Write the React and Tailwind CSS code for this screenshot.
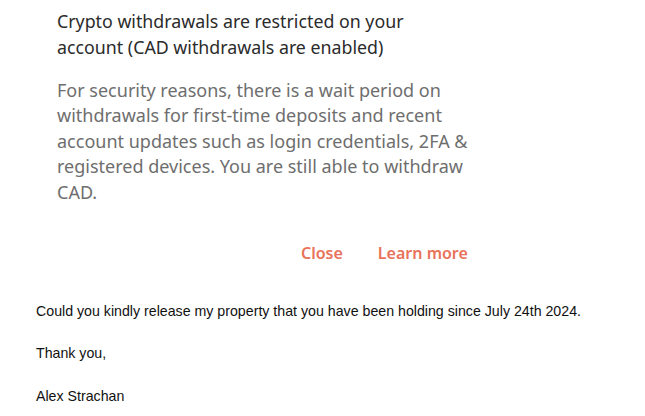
export default function App() {
  return (
    <div className="w-[645px] h-[416px] bg-white overflow-hidden">
      <div className="pl-[57px] pr-4 pt-[8px] w-[500px]">
        <div className="font-['Noto_Sans',sans-serif] text-[17.8px] leading-[26px] text-[#2b2b2b] w-[380px]">
          Crypto withdrawals are restricted on your account (CAD withdrawals are enabled)
        </div>
        <div className="mt-[18px] font-['Noto_Sans',sans-serif] text-[18px] leading-[25.4px] text-[#6e6e6e] w-[420px]">
          For security reasons, there is a wait period on withdrawals for first-time deposits and recent account updates such as login credentials, 2FA &amp; registered devices. You are still able to withdraw CAD.
        </div>
        <div className="mt-[37px] flex gap-[35px] pl-[244px] font-['Noto_Sans',sans-serif] text-[16px] font-semibold text-[#e8735a] leading-[22px]">
          <span>Close</span>
          <span>Learn more</span>
        </div>
      </div>
      <div className="pl-[36px] pt-[39px] font-['Liberation_Sans',Arial,sans-serif] text-[14.2px] leading-[16px] text-[#111]">
        <p>Could you kindly release my property that you have been holding since July 24th 2024.</p>
        <p className="mt-[26px]">Thank you,</p>
        <p className="mt-[27px]">Alex Strachan</p>
      </div>
    </div>
  );
}
